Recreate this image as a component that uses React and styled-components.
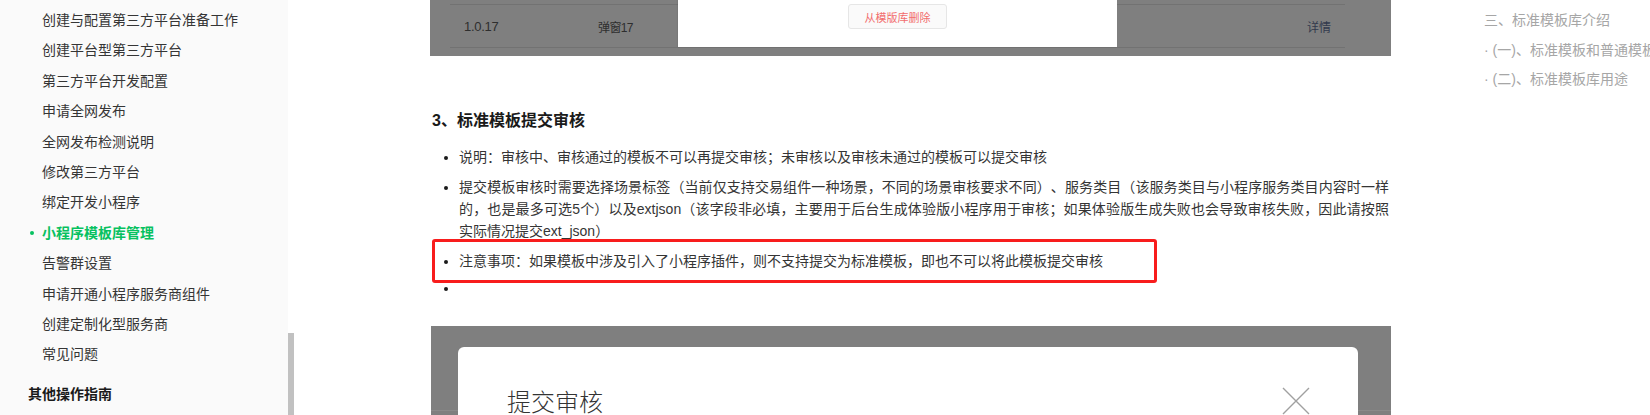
import React from 'react';
import styled, { createGlobalStyle, css } from 'styled-components';

const GlobalStyle = createGlobalStyle`
  html, body { margin: 0; padding: 0; background: #fff; }
  body {
    font-family: "Liberation Sans", "Noto Sans CJK SC", sans-serif;
    text-spacing-trim: space-all;
    -webkit-font-smoothing: antialiased;
  }
`;

const Page = styled.div`
  display: flex;
  width: 1650px;
  height: 415px;
  overflow: hidden;
  background: #fff;
`;

const Sidebar = styled.nav`
  width: 288px;
  flex: none;
  background: #fafafa;
  padding-top: 5px;
  box-sizing: border-box;
`;

const NavItem = styled.div`
  position: relative;
  height: 30.4px;
  line-height: 30.4px;
  padding-left: 42px;
  font-size: 14px;
  white-space: nowrap;
  color: ${p => (p.$active ? '#07c160' : '#353535')};
  font-weight: ${p => (p.$active ? 700 : 400)};
  ${p =>
    p.$active &&
    css`
      &::before {
        content: '';
        position: absolute;
        left: 30px;
        top: 50%;
        width: 4px;
        height: 4px;
        margin-top: -2px;
        border-radius: 50%;
        background: #07c160;
      }
    `}
`;

const NavGroup = styled.div`
  margin-top: 9px;
  padding-left: 28px;
  line-height: 30px;
  font-size: 14px;
  font-weight: 700;
  color: #1a1a1a;
`;

const ScrollTrack = styled.div`
  width: 6px;
  flex: none;
  display: flex;
  flex-direction: column;
  justify-content: flex-end;
`;

const ScrollThumb = styled.div`
  height: 82px;
  background: #c1c1c1;
`;

const Main = styled.main`
  width: 961px;
  flex: none;
  margin-left: 136px;
  display: flex;
  flex-direction: column;
`;

const Shot = styled.div`
  position: relative;
  flex: none;
  background-color: #7f7f7f;
  overflow: hidden;
`;

const TopShot = styled(Shot)`
  height: 56px;
  padding: 4px 46px 0 20px;
  box-sizing: border-box;
`;

const TableRow = styled.div`
  display: flex;
  align-items: center;
  height: 42px;
  border-top: 1px solid #727272;
  border-bottom: 1px solid #727272;
  padding: 0 14px 0 14px;
  color: #2e2e2e;
`;

const Cell = styled.span`
  width: ${p => p.$w || 'auto'};
  flex: ${p => (p.$grow ? 1 : 'none')};
  font-size: ${p => p.$size || '12px'};
  letter-spacing: ${p => p.$ls || '0'};
  color: ${p => p.$color || 'inherit'};
`;

const TopDialog = styled.div`
  position: absolute;
  left: 248px;
  top: 0;
  width: 439px;
  height: 47px;
  background: #fff;
  box-shadow: -1px 0 1px rgba(0, 0, 0, 0.05);
  padding: 4px 0 0 170px;
  box-sizing: border-box;
`;

const DangerButton = styled.button`
  width: 99px;
  height: 25px;
  border: 1px solid #e6e6e6;
  border-radius: 3px;
  background: #fafafa;
  color: #f26d6d;
  font-family: "Noto Sans CJK SC", sans-serif;
  font-size: 11px;
  padding: 0;
`;

const Heading = styled.h3`
  margin: 53px 0 0 2px;
  font-size: 16px;
  line-height: 24px;
  font-weight: 700;
  color: #1a1a1a;
`;

const List = styled.ul`
  margin: 13px 0 0;
  padding: 0 2px 0 29px;
  list-style: disc;
  color: #353535;
`;

const Item = styled.li`
  position: relative;
  font-size: 14px;
  line-height: 22px;
  text-align: justify;
  margin-bottom: 8px;
  &:last-child { margin-bottom: 0; }
  &::marker { color: #1a1a1a; }
  ${p => p.$empty && css`margin-top: -3px;`}
`;

const Highlight = styled.span`
  position: absolute;
  left: -27px;
  top: -11px;
  width: 725px;
  height: 44px;
  box-sizing: border-box;
  border: 3px solid #f81d1d;
  border-radius: 3px;
  pointer-events: none;
`;

const BottomShot = styled(Shot)`
  margin: 27px 0 0 1px;
  width: 960px;
  height: 120px;
  padding: 21px 33px 0 27px;
  box-sizing: border-box;
  background-image: linear-gradient(
    to bottom,
    transparent 84px,
    #8a8a8a 84px,
    #8a8a8a 85px,
    transparent 85px
  );
`;

const Modal = styled.div`
  height: 120px;
  background: #fff;
  border-radius: 6px 6px 0 0;
  padding: 41px 48px 0 49px;
  box-sizing: border-box;
`;

const ModalHeader = styled.div`
  display: flex;
  justify-content: space-between;
  align-items: center;
  height: 26px;
`;

const ModalTitle = styled.div`
  font-family: "Noto Sans CJK SC", sans-serif;
  font-size: 24px;
  font-weight: 300;
  line-height: 26px;
  color: #333;
`;

const Toc = styled.aside`
  margin-left: 93px;
  padding-top: 6px;
  flex: 1;
  min-width: 0;
  overflow: hidden;
`;

const TocItem = styled.div`
  font-size: 14px;
  line-height: 29.5px;
  color: #a6a6a6;
  white-space: nowrap;
`;

const CloseIcon = () => (
  <svg width="28" height="28" viewBox="0 0 28 28" fill="none">
    <path d="M1 1 L27 27 M27 1 L1 27" stroke="#a0a0a0" strokeWidth="1.4" />
  </svg>
);

const navItems = [
  '创建与配置第三方平台准备工作',
  '创建平台型第三方平台',
  '第三方平台开发配置',
  '申请全网发布',
  '全网发布检测说明',
  '修改第三方平台',
  '绑定开发小程序',
  '小程序模板库管理',
  '告警群设置',
  '申请开通小程序服务商组件',
  '创建定制化型服务商',
  '常见问题',
];

export default function App() {
  return (
    <>
      <GlobalStyle />
      <Page>
        <Sidebar>
          {navItems.map(t => (
            <NavItem key={t} $active={t === '小程序模板库管理'}>
              {t}
            </NavItem>
          ))}
          <NavGroup>其他操作指南</NavGroup>
        </Sidebar>
        <ScrollTrack>
          <ScrollThumb />
        </ScrollTrack>
        <Main>
          <TopShot>
            <TableRow>
              <Cell $w="134px" $size="13px" $ls="-0.3px">1.0.17</Cell>
              <Cell $grow $size="12px" $ls="-0.6px">弹窗17</Cell>
              <Cell $color="#323a4d">详情</Cell>
            </TableRow>
            <TopDialog>
              <DangerButton>从模版库删除</DangerButton>
            </TopDialog>
          </TopShot>

          <Heading>3、标准模板提交审核</Heading>
          <List>
            <Item>说明：审核中、审核通过的模板不可以再提交审核；未审核以及审核未通过的模板可以提交审核</Item>
            <Item>
              提交模板审核时需要选择场景标签（当前仅支持交易组件一种场景，不同的场景审核要求不同）、服务类目（该服务类目与小程序服务类目内容时一样的，也是最多可选5个）以及extjson（该字段非必填，主要用于后台生成体验版小程序用于审核；如果体验版生成失败也会导致审核失败，因此请按照实际情况提交ext_json）
            </Item>
            <Item>
              注意事项：如果模板中涉及引入了小程序插件，则不支持提交为标准模板，即也不可以将此模板提交审核
              <Highlight />
            </Item>
            <Item $empty>{'\u00a0'}</Item>
          </List>

          <BottomShot>
            <Modal>
              <ModalHeader>
                <ModalTitle>提交审核</ModalTitle>
                <CloseIcon />
              </ModalHeader>
            </Modal>
          </BottomShot>
        </Main>
        <Toc>
          <TocItem>三、标准模板库介绍</TocItem>
          <TocItem>· (一)、标准模板和普通模板的区别</TocItem>
          <TocItem>· (二)、标准模板库用途</TocItem>
        </Toc>
      </Page>
    </>
  );
}
